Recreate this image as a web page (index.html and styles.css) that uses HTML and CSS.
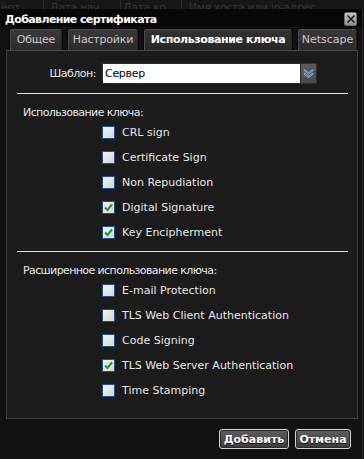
FILE: index.html
```html
<!DOCTYPE html>
<html lang="ru">
<head>
<meta charset="utf-8">
<title>Добавление сертификата</title>
<link rel="stylesheet" href="styles.css">
</head>
<body>
<div class="bg-header">
  <span class="col c1">ерт</span>
  <span class="col c2">Дата нач...</span>
  <span class="col c3">Дата ко...</span>
  <span class="col c4">Имя хоста или ip-адрес</span>
</div>

<div class="dialog">
  <div class="titlebar">
    <span class="title">Добавление сертификата</span>
    <span class="close"><svg width="10" height="10" viewBox="0 0 10 10"><path d="M1.5 1.5 L8.5 8.5 M8.5 1.5 L1.5 8.5" stroke="#1a1a1a" stroke-width="1.6" fill="none"/></svg></span>
  </div>

  <div class="tabs">
    <div class="tab t1">Общее</div>
    <div class="tab t2">Настройки</div>
    <div class="tab t3 active">Использование ключа</div>
    <div class="tab t4">Netscape</div>
  </div>

  <div class="panel">
    <div class="tpl-row">
      <span class="tpl-label">Шаблон:</span>
      <div class="select">
        <span class="select-value">Сервер</span>
        <span class="select-arrow"><svg width="11" height="9" viewBox="0 0 11 9"><path d="M1 1 L5.5 4.5 L10 1 M1 4.5 L5.5 8 L10 4.5" stroke="#9ec3f0" stroke-width="1.6" fill="none"/><path d="M1.5 1.5 L5.5 4.5 L9.5 1.5 M1.5 5 L5.5 8 L9.5 5" stroke="#2a5fb0" stroke-width="0.8" fill="none"/></svg></span>
      </div>
    </div>
    <div class="sep"></div>

    <div class="group-title">Использование ключа:</div>
    <ul class="checks">
      <li><span class="cb"></span>CRL sign</li>
      <li><span class="cb"></span>Certificate Sign</li>
      <li><span class="cb"></span>Non Repudiation</li>
      <li><span class="cb on"><svg width="11" height="11" viewBox="0 0 11 11"><path d="M2 5.5 L4.5 8 L9 2.5" stroke="#1f9a2a" stroke-width="2" fill="none"/></svg></span>Digital Signature</li>
      <li><span class="cb on"><svg width="11" height="11" viewBox="0 0 11 11"><path d="M2 5.5 L4.5 8 L9 2.5" stroke="#1f9a2a" stroke-width="2" fill="none"/></svg></span>Key Encipherment</li>
    </ul>
    <div class="sep sep2"></div>

    <div class="group-title">Расширенное использование ключа:</div>
    <ul class="checks">
      <li><span class="cb"></span>E-mail Protection</li>
      <li><span class="cb"></span>TLS Web Client Authentication</li>
      <li><span class="cb"></span>Code Signing</li>
      <li><span class="cb on"><svg width="11" height="11" viewBox="0 0 11 11"><path d="M2 5.5 L4.5 8 L9 2.5" stroke="#1f9a2a" stroke-width="2" fill="none"/></svg></span>TLS Web Server Authentication</li>
      <li><span class="cb"></span>Time Stamping</li>
    </ul>
  </div>

  <div class="footer">
    <button class="btn btn-add">Добавить</button>
    <button class="btn btn-cancel">Отмена</button>
  </div>
</div>
</body>
</html>
```

FILE: styles.css
```css
html, body {
  margin: 0;
  padding: 0;
  width: 364px;
  height: 459px;
  overflow: hidden;
  background: #0f0f0f;
  font-family: "DejaVu Sans", Verdana, sans-serif;
  font-size: 11px;
  color: #e6e6e6;
}

.bg-header {
  height: 16px;
  display: flex;
  background: #161616;
  color: #353535;
  font-size: 11px;
  line-height: 15px;
  letter-spacing: -0.4px;
}
.bg-header .col {
  border-right: 1px solid #2c2c2c;
  box-sizing: border-box;
  white-space: nowrap;
  overflow: hidden;
}
.bg-header .c1 { width: 44px; padding-left: 1px; }
.bg-header .c2 { width: 77px; padding-left: 6px; }
.bg-header .c3 { width: 61px; padding-left: 2px; }
.bg-header .c4 { flex: 1; padding-left: 7px; border-right: 0; }

.dialog {
  position: absolute;
  left: 0;
  top: 9px;
  width: 362px;
  height: 450px;
  background: #111111;
  border-right: 1px solid #2a2a2a;
}

.titlebar {
  height: 18px;
  display: flex;
  align-items: center;
  justify-content: space-between;
  padding: 0 5px 0 5px;
  background: rgba(0, 0, 0, 0.55);
}
.title {
  font-weight: bold;
  font-size: 11px;
  color: #ffffff;
  letter-spacing: -0.6px;
  position: relative;
  top: 1px;
}
.close {
  width: 11px;
  height: 12px;
  margin-top: 2px;
  border: 1px solid #6e6e6e;
  border-radius: 2px;
  background: linear-gradient(#c4c4c4, #8e8e8e);
  display: flex;
  align-items: center;
  justify-content: center;
}

.tabs {
  display: flex;
  height: 22px;
  margin-top: 1px;
  padding-left: 9px;
}
.tab {
  box-sizing: border-box;
  height: 22px;
  border: 1px solid #050505;
  border-bottom: 0;
  border-radius: 3px 3px 0 0;
  background: linear-gradient(#3a3a3a, #2a2a2a);
  box-shadow: inset 1px 1px 0 #4c4c4c, inset -1px 0 0 #222;
  color: #c8c8c8;
  text-align: center;
  line-height: 21px;
  white-space: nowrap;
  overflow: hidden;
  letter-spacing: -0.2px;
}
.t1 { width: 54px; }
.t2 { width: 72px; margin-left: 4px; }
.t3 { width: 150px; margin-left: 4px; }
.t4 { width: 61px; margin-left: 4px; letter-spacing: 0; }
.tab.active {
  font-weight: bold;
  color: #ffffff;
  letter-spacing: -0.4px;
  background: linear-gradient(#333333, #262626);
}

.panel {
  box-sizing: border-box;
  margin-left: 6px;
  width: 352px;
  height: 369px;
  border: 1px solid #3e3e3e;
  border-top-color: #4a4a4a;
  background: #1b1b1b;
  padding-top: 12px;
}

.tpl-row {
  display: grid;
  grid-template-columns: 95px auto;
  align-items: center;
}
.tpl-label {
  text-align: right;
  padding-right: 6px;
  font-size: 11px;
  color: #e6e6e6;
  letter-spacing: -0.5px;
}
.select {
  display: flex;
  width: 215px;
  height: 21px;
  box-sizing: border-box;
}
.select-value {
  flex: 1;
  background: #ffffff;
  border: 1px solid #2a2a2a;
  color: #000000;
  line-height: 19px;
  padding-left: 2px;
  font-size: 11px;
  letter-spacing: -0.3px;
}
.select-arrow {
  width: 15px;
  background: linear-gradient(#5c5c5c, #4a4a4a);
  border: 1px solid #2e2e2e;
  border-left: 0;
  display: flex;
  align-items: center;
  justify-content: center;
}

.sep {
  height: 1px;
  background: #e2e2e2;
  margin: 9px 9px 0 10px;
}
.sep2 {
  margin-top: 6px;
}

.group-title {
  padding-left: 16px;
  margin-top: 12px;
  line-height: 14px;
  color: #e6e6e6;
  letter-spacing: -0.6px;
}

.checks {
  list-style: none;
  margin: 0;
  padding: 0 0 0 95px;
}
.checks li {
  height: 25px;
  display: flex;
  align-items: center;
  gap: 7px;
  white-space: nowrap;
  color: #e6e6e6;
}
.cb {
  box-sizing: border-box;
  width: 13px;
  height: 13px;
  border: 1px solid #1f4f86;
  background: linear-gradient(135deg, #f2f2f2, #d6d6d6);
  display: flex;
  align-items: center;
  justify-content: center;
  flex: none;
}

.footer {
  display: flex;
  justify-content: flex-end;
  gap: 6px;
  padding-top: 10px;
  padding-right: 11px;
}
.btn {
  box-sizing: border-box;
  height: 20px;
  padding: 0;
  border: 1px solid #d2d2d2;
  border-radius: 3px;
  background: linear-gradient(#5e5e5e, #3c3c3c);
  box-shadow: inset 0 0 0 1px #2a2a2a;
  color: #ffffff;
  font-family: "DejaVu Sans", Verdana, sans-serif;
  font-size: 11px;
  font-weight: bold;
  text-shadow: 0 1px 0 #000;
}
.btn-add { width: 70px; }
.btn-cancel { width: 56px; }
```
